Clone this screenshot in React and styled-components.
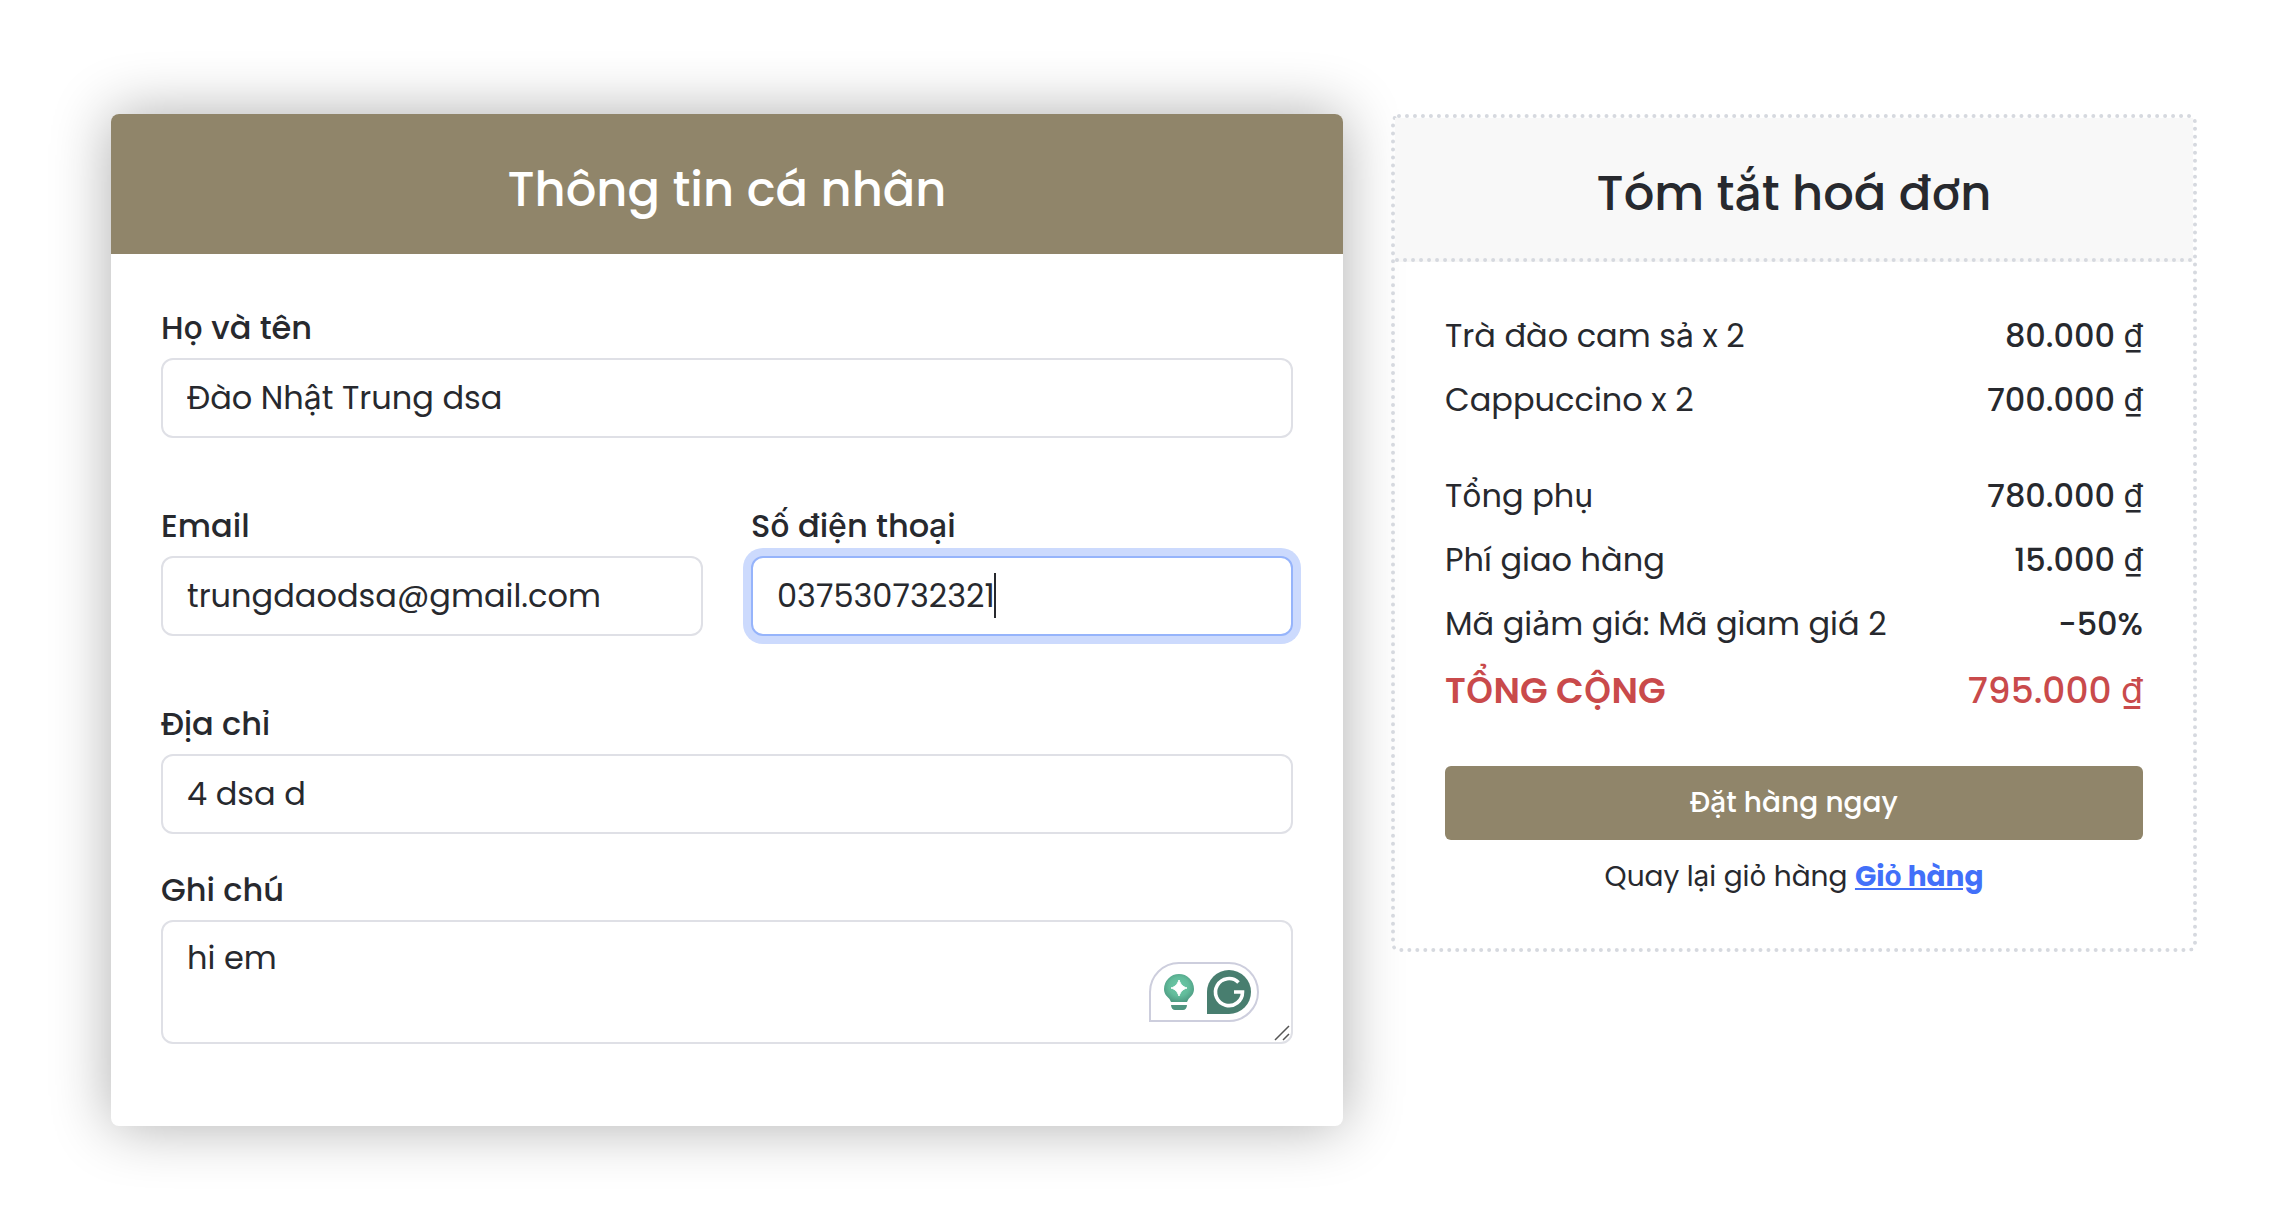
import React from "react";
import styled, { createGlobalStyle, css } from "styled-components";

const ink = "#27292e";
const brand = "#90856a";
const line = "#dfe0e6";
const dots = "#d6d9df";

const GlobalStyle = createGlobalStyle`
  *, *::before, *::after { box-sizing: border-box; }
  body {
    margin: 0;
    background: #fff;
    color: ${ink};
    font: 400 32px/48px Poppins, Inter, "Liberation Sans", sans-serif;
  }
`;

const Page = styled.main`
  display: grid;
  grid-template-columns: 1232fr 806fr;
  align-items: start;
  gap: 48px;
  padding: 114px 97px 90px 111px;
`;

const FormCard = styled.form`
  border-radius: 8px;
  background: #fff;
  box-shadow: 0 0 60px rgba(0, 0, 0, 0.32);
`;

const FormHeader = styled.header`
  padding: 40px 48px 28px;
  border-radius: 8px 8px 0 0;
  background: ${brand};
  color: #fff;
  text-align: center;
`;

const Title = styled.h2`
  margin: 0;
  font-size: 48px;
  line-height: 72px;
  font-weight: 500;
`;

const FormBody = styled.div`
  display: flex;
  flex-direction: column;
  gap: 64px;
  padding: 50px 50px 82px;
`;

const FieldPair = styled.div`
  display: grid;
  grid-template-columns: 1fr 1fr;
  gap: 48px;
`;

const FieldStack = styled.div`
  display: flex;
  flex-direction: column;
  gap: 32px;
`;

const Field = styled.div`
  display: flex;
  flex-direction: column;
  gap: 6px;
  min-width: 0;
`;

const Label = styled.label`
  font-weight: 500;
`;

const ControlWrap = styled.div`
  position: relative;
  display: flex;
`;

const control = css`
  width: 100%;
  border: 2px solid ${line};
  border-radius: 12px;
  outline: none;
  background: #fff;
  color: inherit;
  font: inherit;
`;

const Input = styled.input`
  ${control}
  height: 80px;
  padding: 0 24px;
  ${({ $active }) =>
    $active &&
    css`
      border-color: #96b4fb;
      box-shadow: 0 0 0 8px #ccdafd;
      caret-color: transparent;
    `}
`;

const TextArea = styled.textarea`
  ${control}
  height: 124px;
  padding: 12px 24px;
  resize: none;
`;

const Caret = styled.span`
  position: absolute;
  top: 17px;
  left: 243px;
  width: 2px;
  height: 45px;
  background: ${ink};
`;

const Grip = styled.svg`
  position: absolute;
  right: 3px;
  bottom: 3px;
  width: 16px;
  height: 16px;
`;

const Assistant = styled.div`
  position: absolute;
  right: 34px;
  bottom: 22px;
  display: flex;
  align-items: center;
  justify-content: space-between;
  width: 110px;
  height: 60px;
  padding: 0 6px 0 13px;
  border: 2px solid #cdcedd;
  border-radius: 30px 30px 30px 0;
  background: #fff;
`;

const SummaryCard = styled.section`
  border: 4px dotted ${dots};
  border-radius: 8px;
`;

const SummaryHeader = styled.header`
  padding: 40px 48px 28px;
  border-bottom: 4px dotted ${dots};
  background: #f8f8f8;
  text-align: center;
`;

const SummaryBody = styled.div`
  display: flex;
  flex-direction: column;
  gap: 48px;
  padding: 50px;
`;

const Lines = styled.dl`
  display: flex;
  flex-direction: column;
  gap: 16px;
  margin: 0;
`;

const Line = styled.div`
  display: flex;
  justify-content: space-between;
  ${({ $total }) =>
    $total &&
    css`
      color: #c94a4b;
      font-size: 36px;
      line-height: 54px;
    `}
`;

const Name = styled.dt`
  font-weight: ${({ $strong }) => ($strong ? 600 : 400)};
`;

const Amount = styled.dd`
  margin: 0;
  font-weight: 500;
`;

const Currency = styled.span`
  font-weight: 400;
`;

const Actions = styled.div`
  display: flex;
  flex-direction: column;
  gap: 16px;
  font-size: 28px;
  line-height: 42px;
  text-align: center;
`;

const Submit = styled.button`
  padding: 16px;
  border: 0;
  border-radius: 6px;
  background: ${brand};
  color: #fff;
  font: inherit;
  font-weight: 500;
`;

const Back = styled.p`
  margin: 0;
`;

const CartLink = styled.a`
  color: #4270f9;
  font-weight: 700;
  text-decoration: underline;
`;

function Bulb() {
  return (
    <svg width="30" height="38" viewBox="0 0 30 38" aria-hidden="true">
      <defs>
        <radialGradient id="glow" cx="50%" cy="45%" r="55%">
          <stop offset="0" stopColor="#6cc9a8" />
          <stop offset="0.6" stopColor="#62bc9b" />
          <stop offset="1" stopColor="#4f9d84" />
        </radialGradient>
      </defs>
      <path d="M15 1a15 15 0 0 1 15 15c0 5-3 7.500-5.500 10L23 29H7l-1.500-3C3 23.500 0 21 0 16A15 15 0 0 1 15 1Z" fill="url(#glow)" />
      <path d="M15 7c2 5 3.500 6.500 8 8-4.500 1.500-6 3-8 8-2-5-3.500-6.500-8-8 4.500-1.500 6-3 8-8Z" fill="#fff" stroke="#fff" strokeLinejoin="round" />
      <path d="M7 32h16c0 3-2 5-4 5h-8c-2 0-4-2-4-5Z" fill="#4f9580" />
    </svg>
  );
}

function GMark() {
  return (
    <svg width="44" height="44" viewBox="0 0 44 44" aria-hidden="true">
      <path d="M22 0a22 22 0 1 1 0 44H0V22A22 22 0 0 1 22 0Z" fill="#487e6f" />
      <path d="M31.500 12.500A13.500 13.500 0 1 0 35.500 22H27" fill="none" stroke="#fff" strokeWidth="3.600" />
    </svg>
  );
}

const items = [
  ["Trà đào cam sả x 2", "80.000"],
  ["Cappuccino x 2", "700.000"],
];

const fees = [
  ["Tổng phụ", "780.000"],
  ["Phí giao hàng", "15.000"],
];

function Money({ value }) {
  return (
    <>
      {value} <Currency>₫</Currency>
    </>
  );
}

const renderLine = ([name, value]) => (
  <Line key={name}>
    <Name>{name}</Name>
    <Amount>
      <Money value={value} />
    </Amount>
  </Line>
);

export default function App() {
  return (
    <>
      <GlobalStyle />
      <Page>
        <FormCard>
          <FormHeader>
            <Title>Thông tin cá nhân</Title>
          </FormHeader>
          <FormBody>
            <Field>
              <Label htmlFor="name">Họ và tên</Label>
              <Input id="name" defaultValue="Đào Nhật Trung dsa" />
            </Field>
            <FieldPair>
              <Field>
                <Label htmlFor="email">Email</Label>
                <Input id="email" type="email" defaultValue="trungdaodsa@gmail.com" />
              </Field>
              <Field>
                <Label htmlFor="phone">Số điện thoại</Label>
                <ControlWrap>
                  <Input id="phone" type="tel" defaultValue="037530732321" $active />
                  <Caret />
                </ControlWrap>
              </Field>
            </FieldPair>
            <FieldStack>
              <Field>
                <Label htmlFor="address">Địa chỉ</Label>
                <Input id="address" defaultValue="4 dsa d" />
              </Field>
              <Field>
                <Label htmlFor="note">Ghi chú</Label>
                <ControlWrap>
                  <TextArea id="note" defaultValue="hi em" />
                  <Assistant>
                    <Bulb />
                    <GMark />
                  </Assistant>
                  <Grip viewBox="0 0 16 16" aria-hidden="true">
                    <path d="M1 15 15 1M9 15l6-6" stroke="#555" strokeWidth="1.500" />
                  </Grip>
                </ControlWrap>
              </Field>
            </FieldStack>
          </FormBody>
        </FormCard>

        <SummaryCard>
          <SummaryHeader>
            <Title>Tóm tắt hoá đơn</Title>
          </SummaryHeader>
          <SummaryBody>
            <Lines>{items.map(renderLine)}</Lines>
            <Lines>
              {fees.map(renderLine)}
              <Line>
                <Name>Mã giảm giá: Mã gỉam giá 2</Name>
                <Amount>-50%</Amount>
              </Line>
              <Line $total>
                <Name $strong>TỔNG CỘNG</Name>
                <Amount>
                  <Money value="795.000" />
                </Amount>
              </Line>
            </Lines>
            <Actions>
              <Submit type="button">Đặt hàng ngay</Submit>
              <Back>
                Quay lại giỏ hàng <CartLink href="#cart">Giỏ hàng</CartLink>
              </Back>
            </Actions>
          </SummaryBody>
        </SummaryCard>
      </Page>
    </>
  );
}
